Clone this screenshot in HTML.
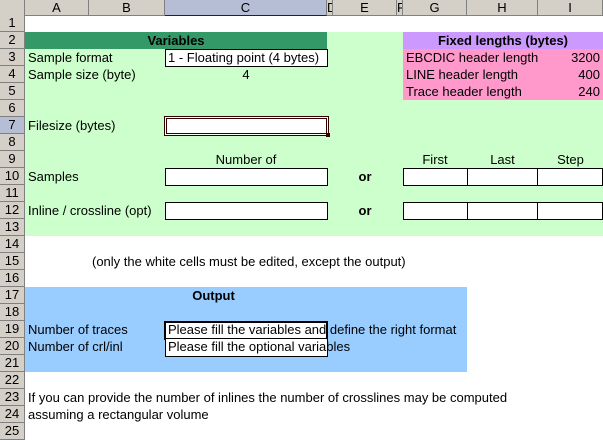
<!DOCTYPE html>
<html><head><style>
*{margin:0;padding:0;box-sizing:border-box}
body{width:603px;height:429px;overflow:hidden;background:#fff;font-family:"Liberation Sans",Arial,sans-serif;font-size:13px;position:relative}
.a{position:absolute}
.ch{position:absolute;top:0;height:16px;background:#d4d0c8;border-right:1px solid #808080;border-bottom:1px solid #808080;text-align:center;line-height:15px;font-size:13px}
.rh{position:absolute;left:0;width:25px;height:17px;background:#d4d0c8;border-right:1px solid #808080;border-bottom:1px solid #808080;text-align:center;line-height:16px;font-size:13px}
.t{position:absolute;line-height:17px;white-space:nowrap}
.box{position:absolute;background:#fff;border:1px solid #000}
</style></head><body>
<!-- fills -->
<div class="a" style="left:25px;top:32px;width:578px;height:204px;background:#ccffcc"></div>
<div class="a" style="left:25px;top:32px;width:302px;height:17px;background:#339966"></div>
<div class="a" style="left:403px;top:32px;width:200px;height:17px;background:#cc99ff"></div>
<div class="a" style="left:403px;top:49px;width:200px;height:51px;background:#ff99cc"></div>
<div class="a" style="left:25px;top:287px;width:442px;height:85px;background:#99ccff"></div>

<!-- column headers -->
<div class="ch" style="left:0;width:25px"></div>
<div class="ch" style="left:25px;width:64px">A</div>
<div class="ch" style="left:89px;width:76px">B</div>
<div class="ch" style="left:165px;width:162px;background:#b6bed6;border-bottom:1px solid #0a246a">C</div>
<div class="ch" style="left:327px;width:6px;overflow:hidden">D</div>
<div class="ch" style="left:333px;width:64px">E</div>
<div class="ch" style="left:397px;width:6px;overflow:hidden">F</div>
<div class="ch" style="left:403px;width:64px">G</div>
<div class="ch" style="left:467px;width:71px">H</div>
<div class="ch" style="left:538px;width:65px">I</div>

<!-- row headers -->
<div class="rh" style="top:15px">1</div>
<div class="rh" style="top:32px">2</div>
<div class="rh" style="top:49px">3</div>
<div class="rh" style="top:66px">4</div>
<div class="rh" style="top:83px">5</div>
<div class="rh" style="top:100px">6</div>
<div class="rh" style="top:117px;background:#b6bed6">7</div>
<div class="rh" style="top:134px">8</div>
<div class="rh" style="top:151px">9</div>
<div class="rh" style="top:168px">10</div>
<div class="rh" style="top:185px">11</div>
<div class="rh" style="top:202px">12</div>
<div class="rh" style="top:219px">13</div>
<div class="rh" style="top:236px">14</div>
<div class="rh" style="top:253px">15</div>
<div class="rh" style="top:270px">16</div>
<div class="rh" style="top:287px">17</div>
<div class="rh" style="top:304px">18</div>
<div class="rh" style="top:321px">19</div>
<div class="rh" style="top:338px">20</div>
<div class="rh" style="top:355px">21</div>
<div class="rh" style="top:372px">22</div>
<div class="rh" style="top:389px">23</div>
<div class="rh" style="top:406px">24</div>
<div class="rh" style="top:423px">25</div>

<!-- boxes -->
<div class="box" style="left:165px;top:49px;width:163px;height:18px"></div>
<div class="box" style="left:164px;top:116px;width:165px;height:20px;border:3px double #300"></div>
<div class="a" style="left:326px;top:133px;width:4px;height:4px;background:#300"></div>
<div class="box" style="left:165px;top:168px;width:163px;height:18px"></div>
<div class="box" style="left:403px;top:168px;width:65px;height:18px"></div>
<div class="box" style="left:467px;top:168px;width:71px;height:18px"></div>
<div class="box" style="left:537px;top:168px;width:66px;height:18px"></div>
<div class="box" style="left:165px;top:202px;width:163px;height:18px"></div>
<div class="box" style="left:403px;top:202px;width:65px;height:18px"></div>
<div class="box" style="left:467px;top:202px;width:71px;height:18px"></div>
<div class="box" style="left:537px;top:202px;width:66px;height:18px"></div>
<div class="box" style="left:164px;top:321px;width:164px;height:19px;border:2px solid #000"></div>
<div class="box" style="left:165px;top:339px;width:163px;height:18px;border-top:none"></div>

<!-- text -->
<div class="t" style="left:25px;width:302px;top:32px;text-align:center;font-weight:bold">Variables</div>
<div class="t" style="left:403px;width:200px;top:32px;text-align:center;font-weight:bold">Fixed lengths (bytes)</div>
<div class="t" style="left:28px;top:49px">Sample format</div>
<div class="t" style="left:168px;top:49px">1 - Floating point (4 bytes)</div>
<div class="t" style="left:28px;top:66px">Sample size (byte)</div>
<div class="t" style="left:165px;width:162px;top:66px;text-align:center">4</div>
<div class="t" style="left:406px;top:49px">EBCDIC header length</div>
<div class="t" style="left:538px;width:62px;top:49px;text-align:right">3200</div>
<div class="t" style="left:406px;top:66px">LINE header length</div>
<div class="t" style="left:538px;width:62px;top:66px;text-align:right">400</div>
<div class="t" style="left:406px;top:83px">Trace header length</div>
<div class="t" style="left:538px;width:62px;top:83px;text-align:right">240</div>
<div class="t" style="left:28px;top:117px">Filesize (bytes)</div>
<div class="t" style="left:165px;width:162px;top:151px;text-align:center">Number of</div>
<div class="t" style="left:403px;width:64px;top:151px;text-align:center">First</div>
<div class="t" style="left:467px;width:71px;top:151px;text-align:center">Last</div>
<div class="t" style="left:538px;width:65px;top:151px;text-align:center">Step</div>
<div class="t" style="left:28px;top:168px">Samples</div>
<div class="t" style="left:333px;width:64px;top:168px;text-align:center;font-weight:bold">or</div>
<div class="t" style="left:28px;top:202px">Inline / crossline (opt)</div>
<div class="t" style="left:333px;width:64px;top:202px;text-align:center;font-weight:bold">or</div>
<div class="t" style="left:92px;top:253px">(only the white cells must be edited, except the output)</div>
<div class="t" style="left:25px;width:377px;top:287px;text-align:center;font-weight:bold">Output</div>
<div class="t" style="left:28px;top:321px">Number of traces</div>
<div class="t" style="left:168px;top:321px">Please fill the variables and define the right format</div>
<div class="t" style="left:28px;top:338px">Number of crl/inl</div>
<div class="t" style="left:168px;top:338px">Please fill the optional variables</div>
<div class="t" style="left:28px;top:389px">If you can provide the number of inlines the number of crosslines may be computed</div>
<div class="t" style="left:28px;top:406px">assuming a rectangular volume</div>
</body></html>
